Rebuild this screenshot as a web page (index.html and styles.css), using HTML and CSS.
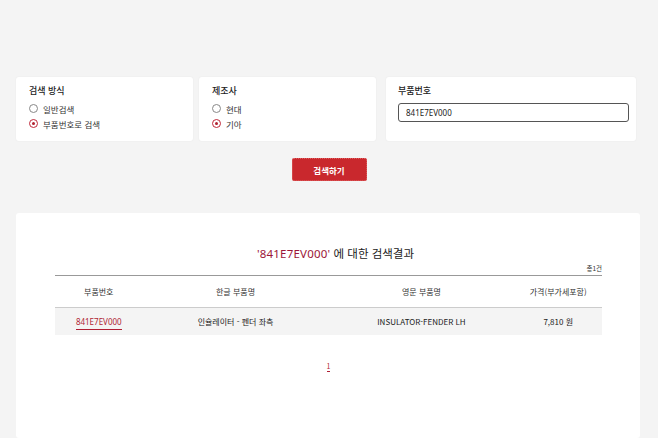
FILE: index.html
```html
<!DOCTYPE html>
<html lang="ko">
<head>
    <meta charset="UTF-8">
    <meta name="viewport" content="width=device-width, initial-scale=1.0">
    <title>부품 검색</title>
    <link rel="stylesheet" href="styles.css">
</head>
<body>
    <div class="search-area">
        <div class="search-box box-method">
            <p class="box-title">검색 방식</p>
            <label class="radio"><span class="radio-mark"></span>일반검색</label>
            <label class="radio"><span class="radio-mark checked"></span>부품번호로 검색</label>
        </div>
        <div class="search-box box-maker">
            <p class="box-title">제조사</p>
            <label class="radio"><span class="radio-mark"></span>현대</label>
            <label class="radio"><span class="radio-mark checked"></span>기아</label>
        </div>
        <div class="search-box box-number">
            <p class="box-title">부품번호</p>
            <input type="text" class="part-input" value="841E7EV000">
        </div>
    </div>

    <div class="button-row">
        <button class="search-button">검색하기</button>
    </div>

    <div class="result-box">
        <h2 class="result-title"><span class="keyword">'841E7EV000'</span> 에 대한 검색결과</h2>
        <p class="result-count">총1건</p>
        <table class="result-table">
            <thead>
                <tr>
                    <th class="col-no">부품번호</th>
                    <th class="col-kr">한글 부품명</th>
                    <th class="col-en">영문 부품명</th>
                    <th class="col-price">가격(부가세포함)</th>
                </tr>
            </thead>
            <tbody>
                <tr>
                    <td><a href="#" class="part-link">841E7EV000</a></td>
                    <td>인슐레이터 - 펜더 좌측</td>
                    <td>INSULATOR-FENDER LH</td>
                    <td>7,810 원</td>
                </tr>
            </tbody>
        </table>
        <div class="paging">
            <a href="#" class="page-num">1</a>
        </div>
    </div>
</body>
</html>
```

FILE: styles.css
```css
body {
    font-family: "Noto Sans CJK KR", "Noto Sans", sans-serif;
    margin: 0;
    padding: 0;
    background-color: #f4f4f4;
    color: #222;
    overflow: hidden;
}

.search-area {
    display: grid;
    grid-template-columns: 177px 177px 254px;
    column-gap: 6px;
    padding: 77px 0 0 16px;
}

.search-box {
    background: #fff;
    height: 64px;
    box-sizing: border-box;
    padding: 8px 13px;
    border-radius: 3px;
    box-shadow: 0 0 2px rgba(0, 0, 0, 0.06);
}

.box-number {
    margin-left: 4px;
    padding-left: 12px;
}

.box-title {
    margin: 0 0 4px;
    font-size: 9px;
    font-weight: 500;
    line-height: 12px;
}

.radio {
    display: flex;
    align-items: center;
    height: 15px;
    font-size: 8.5px;
    color: #333;
}

.radio-mark {
    width: 7px;
    height: 7px;
    border: 1px solid #888;
    border-radius: 50%;
    margin-right: 5px;
    box-sizing: content-box;
    position: relative;
}

.radio-mark.checked {
    border-color: #c0283a;
}

.radio-mark.checked::after {
    content: "";
    position: absolute;
    left: 2px;
    top: 2px;
    width: 3px;
    height: 3px;
    border-radius: 50%;
    background: #b0202f;
}

.part-input {
    display: block;
    width: 231px;
    height: 19px;
    box-sizing: border-box;
    padding: 0 7px;
    margin-top: 6px;
    border: 1px solid #555;
    border-radius: 3px;
    font-family: "Noto Sans", sans-serif;
    font-size: 8px;
    color: #222;
}

.button-row {
    display: flex;
    justify-content: center;
    padding: 17px 0 0 0;
}

.search-button {
    width: 75px;
    height: 23px;
    background-color: #c9282d;
    border: 1px dotted #e06060;
    border-radius: 2px;
    color: #fff;
    font-family: inherit;
    font-size: 8.5px;
    font-weight: bold;
    cursor: pointer;
}

.result-box {
    background: #fff;
    margin: 32px 18px 0 16px;
    padding: 32px 38px 0 39px;
    height: 225px;
    box-sizing: border-box;
    border-radius: 3px;
}

.result-title {
    margin: 0;
    padding-left: 14px;
    text-align: center;
    font-size: 11.5px;
    font-weight: normal;
    line-height: 16px;
}

.keyword {
    color: #9c1538;
    font-family: "Noto Sans", sans-serif;
    letter-spacing: 0.2px;
}

.result-count {
    margin: 1px 0 0;
    text-align: right;
    font-size: 6.5px;
    line-height: 10px;
    color: #333;
}

.result-table {
    width: 100%;
    border-collapse: collapse;
    margin-top: 2px;
    font-size: 8px;
}

.result-table th {
    font-weight: normal;
    height: 31px;
    border-top: 1px solid #999;
    border-bottom: 1px solid #ccc;
    padding: 0;
    color: #333;
}

.result-table td {
    background: #f4f4f4;
    height: 27px;
    padding: 0;
    text-align: center;
    color: #222;
}

.col-no { width: 16%; }
.col-kr { width: 34%; }
.col-en { width: 34%; }
.col-price { width: 16%; }

.part-link {
    color: #b01f35;
    text-decoration: none;
    border-bottom: 1px solid #b01f35;
    padding-bottom: 2px;
    font-family: "Noto Sans", sans-serif;
}

.paging {
    text-align: center;
    margin-top: 15px;
}

.page-num {
    color: #b01f35;
    font-size: 7px;
    text-decoration: none;
    border-bottom: 1px solid #b01f35;
}
```
